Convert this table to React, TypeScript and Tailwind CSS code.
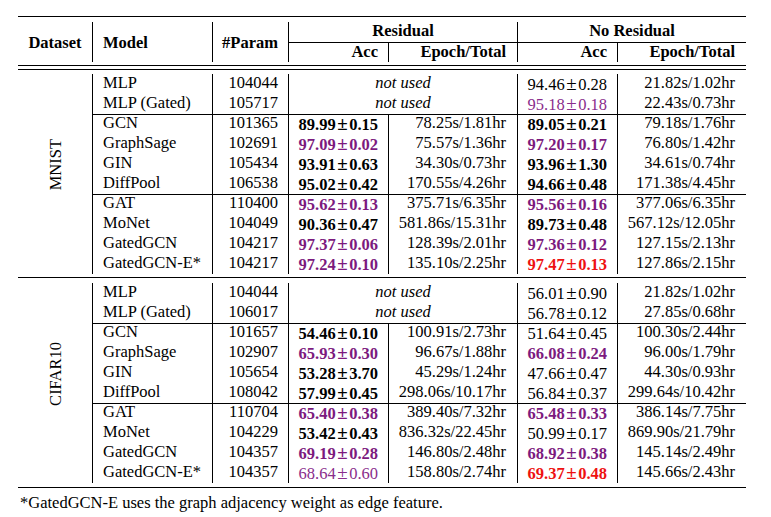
import React from "react";

type Style = "n" | "b" | "p" | "pn" | "r";
type Row = {
  model: string;
  param: string;
  res?: [string, Style, string];
  nores: [string, Style, string];
  group: number;
};

const styleCls: Record<Style, string> = {
  n: "text-black",
  b: "text-black font-bold",
  p: "text-[#7c1a7e] font-bold",
  pn: "text-[#8a2d8c]",
  r: "text-[#ee1111] font-bold",
};

function Acc({ v, s }: { v: string; s: Style }) {
  const [a, b] = v.split("±");
  return (
    <span className={styleCls[s]}>
      {a}
      <span className="mx-[1.5px] text-[19px] leading-none">±</span>
      {b}
    </span>
  );
}

const mnist: Row[] = [
  { model: "MLP", param: "104044", nores: ["94.46±0.28", "n", "21.82s/1.02hr"], group: 0 },
  { model: "MLP (Gated)", param: "105717", nores: ["95.18±0.18", "pn", "22.43s/0.73hr"], group: 0 },
  { model: "GCN", param: "101365", res: ["89.99±0.15", "b", "78.25s/1.81hr"], nores: ["89.05±0.21", "b", "79.18s/1.76hr"], group: 1 },
  { model: "GraphSage", param: "102691", res: ["97.09±0.02", "p", "75.57s/1.36hr"], nores: ["97.20±0.17", "p", "76.80s/1.42hr"], group: 1 },
  { model: "GIN", param: "105434", res: ["93.91±0.63", "b", "34.30s/0.73hr"], nores: ["93.96±1.30", "b", "34.61s/0.74hr"], group: 1 },
  { model: "DiffPool", param: "106538", res: ["95.02±0.42", "b", "170.55s/4.26hr"], nores: ["94.66±0.48", "b", "171.38s/4.45hr"], group: 1 },
  { model: "GAT", param: "110400", res: ["95.62±0.13", "p", "375.71s/6.35hr"], nores: ["95.56±0.16", "p", "377.06s/6.35hr"], group: 2 },
  { model: "MoNet", param: "104049", res: ["90.36±0.47", "b", "581.86s/15.31hr"], nores: ["89.73±0.48", "b", "567.12s/12.05hr"], group: 2 },
  { model: "GatedGCN", param: "104217", res: ["97.37±0.06", "p", "128.39s/2.01hr"], nores: ["97.36±0.12", "p", "127.15s/2.13hr"], group: 2 },
  { model: "GatedGCN-E*", param: "104217", res: ["97.24±0.10", "p", "135.10s/2.25hr"], nores: ["97.47±0.13", "r", "127.86s/2.15hr"], group: 2 },
];

const cifar: Row[] = [
  { model: "MLP", param: "104044", nores: ["56.01±0.90", "n", "21.82s/1.02hr"], group: 0 },
  { model: "MLP (Gated)", param: "106017", nores: ["56.78±0.12", "n", "27.85s/0.68hr"], group: 0 },
  { model: "GCN", param: "101657", res: ["54.46±0.10", "b", "100.91s/2.73hr"], nores: ["51.64±0.45", "n", "100.30s/2.44hr"], group: 1 },
  { model: "GraphSage", param: "102907", res: ["65.93±0.30", "p", "96.67s/1.88hr"], nores: ["66.08±0.24", "p", "96.00s/1.79hr"], group: 1 },
  { model: "GIN", param: "105654", res: ["53.28±3.70", "b", "45.29s/1.24hr"], nores: ["47.66±0.47", "n", "44.30s/0.93hr"], group: 1 },
  { model: "DiffPool", param: "108042", res: ["57.99±0.45", "b", "298.06s/10.17hr"], nores: ["56.84±0.37", "n", "299.64s/10.42hr"], group: 1 },
  { model: "GAT", param: "110704", res: ["65.40±0.38", "p", "389.40s/7.32hr"], nores: ["65.48±0.33", "p", "386.14s/7.75hr"], group: 2 },
  { model: "MoNet", param: "104229", res: ["53.42±0.43", "b", "836.32s/22.45hr"], nores: ["50.99±0.17", "n", "869.90s/21.79hr"], group: 2 },
  { model: "GatedGCN", param: "104357", res: ["69.19±0.28", "p", "146.80s/2.48hr"], nores: ["68.92±0.38", "p", "145.14s/2.49hr"], group: 2 },
  { model: "GatedGCN-E*", param: "104357", res: ["68.64±0.60", "pn", "158.80s/2.74hr"], nores: ["69.37±0.48", "r", "145.66s/2.43hr"], group: 2 },
];

function BodyRow({ r, first }: { r: Row; first: boolean }) {
  return (
    <div
      className={
        "flex h-[20px] leading-[17px] " +
        (first ? "shadow-[inset_0_1px_0_#000]" : "")
      }
    >
      <div className="w-[120px] border-l border-black pl-[10px] whitespace-nowrap">{r.model}</div>
      <div className="w-[76px] border-l border-black pr-[10px] text-right">{r.param}</div>
      {r.res ? (
        <>
          <div className="w-[100px] border-l border-black pr-[10px] text-right whitespace-nowrap">
            <Acc v={r.res[0]} s={r.res[1]} />
          </div>
          <div className="w-[129px] border-l border-black pr-[11px] text-right whitespace-nowrap">{r.res[2]}</div>
        </>
      ) : (
        <div className="w-[229px] border-l border-black text-center italic">not used</div>
      )}
      <div className="w-[100px] border-l border-black pr-[10px] text-right whitespace-nowrap">
        <Acc v={r.nores[0]} s={r.nores[1]} />
      </div>
      <div className="w-[129px] border-l border-black pr-[11px] text-right whitespace-nowrap">{r.nores[2]}</div>
    </div>
  );
}

function Section({ label, rows }: { label: string; rows: Row[] }) {
  return (
    <div className="flex">
      <div className="w-[74px] flex items-center justify-center pb-[18px]">
        <span className="[writing-mode:vertical-rl] rotate-180 leading-[17px]">{label}</span>
      </div>
      <div className="w-[654px] flex flex-col">
        {rows.map((r, i) => (
          <BodyRow key={i} r={r} first={i > 0 && rows[i - 1].group !== r.group} />
        ))}
      </div>
    </div>
  );
}

export default function App() {
  return (
    <div className="w-[771px] h-[517px] bg-white text-black font-['Liberation_Serif',serif] text-[16.5px] pt-[16px] pl-[18px]">
      <div className="w-[728px] flex flex-col">
        <div className="h-px bg-black" />
        <div className="h-[5px]" />
        {/* header */}
        <div className="flex h-[40px] font-bold leading-[17px]">
          <div className="w-[74px] flex items-center justify-center">Dataset</div>
          <div className="w-[120px] border-l border-black pl-[10px] flex items-center">Model</div>
          <div className="w-[76px] border-l border-black pr-[10px] flex items-center justify-end">#Param</div>
          <div className="w-[229px] border-l border-black flex flex-col">
            <div className="h-[20px] text-center">Residual</div>
            <div className="h-[20px] flex shadow-[inset_0_1px_0_#000] pt-[1px]">
              <div className="w-[99px] pr-[10px] text-right">Acc</div>
              <div className="w-[129px] border-l border-black pr-[11px] text-right">Epoch/Total</div>
            </div>
          </div>
          <div className="w-[229px] border-l border-black flex flex-col">
            <div className="h-[20px] text-center">No Residual</div>
            <div className="h-[20px] flex shadow-[inset_0_1px_0_#000] pt-[1px]">
              <div className="w-[99px] pr-[10px] text-right">Acc</div>
              <div className="w-[129px] border-l border-black pr-[11px] text-right">Epoch/Total</div>
            </div>
          </div>
        </div>
        <div className="h-[3px]" />
        <div className="h-px bg-black" />
        <div className="h-[3px]" />
        <div className="h-px bg-black" />
        <div className="h-[4px]" />
        <Section label="MNIST" rows={mnist} />
        <div className="h-[3px]" />
        <div className="h-px bg-black" />
        <div className="h-[5px]" />
        <Section label="CIFAR10" rows={cifar} />
        <div className="h-[4px]" />
        <div className="h-px bg-black" />
        <div className="h-[6px]" />
        <div className="leading-[17px] pl-[2px] whitespace-nowrap">
          *GatedGCN-E uses the graph adjacency weight as edge feature.
        </div>
      </div>
    </div>
  );
}
